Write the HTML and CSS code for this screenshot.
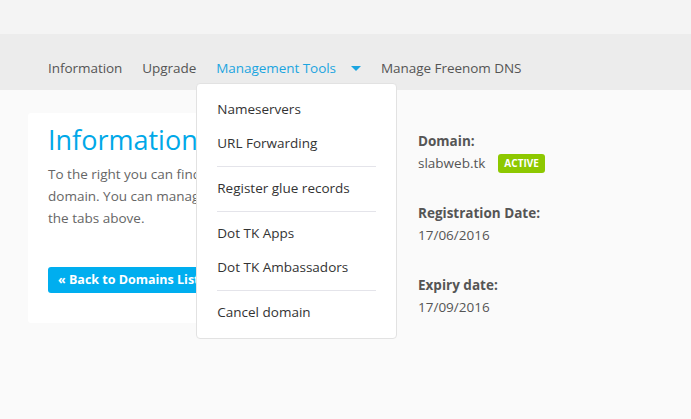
FILE: index.html
```html
<!DOCTYPE html>
<html>
<head>
<meta charset="utf-8">
<link rel="stylesheet" href="styles.css">
</head>
<body>
<div class="topbar"></div>
<nav class="nav">
  <a class="nav-item">Information</a>
  <a class="nav-item">Upgrade</a>
  <div class="nav-drop">
    <a class="nav-item active">Management Tools <span class="caret"></span></a>
    <div class="dropdown">
      <a class="dd-item">Nameservers</a>
      <a class="dd-item">URL Forwarding</a>
      <div class="dd-sep"></div>
      <a class="dd-item">Register glue records</a>
      <div class="dd-sep"></div>
      <a class="dd-item">Dot TK Apps</a>
      <a class="dd-item">Dot TK Ambassadors</a>
      <div class="dd-sep"></div>
      <a class="dd-item">Cancel domain</a>
    </div>
  </div>
  <a class="nav-item">Manage Freenom DNS</a>
</nav>
<main class="main">
  <section class="card">
    <h1 class="title">Information</h1>
    <p class="text">To the right you can find the details of your domain. You can manage your domain through<br>the tabs above.</p>
    <a class="btn">« Back to Domains List</a>
  </section>
  <section class="info">
    <div class="field">
      <div class="label">Domain:</div>
      <div class="value">slabweb.tk <span class="badge">ACTIVE</span></div>
    </div>
    <div class="field">
      <div class="label">Registration Date:</div>
      <div class="value">17/06/2016</div>
    </div>
    <div class="field">
      <div class="label">Expiry date:</div>
      <div class="value">17/09/2016</div>
    </div>
  </section>
</main>
</body>
</html>
```
FILE: styles.css
```css
* { box-sizing: border-box; }
html, body { margin: 0; padding: 0; }
body {
  background: #fafafa;
  font-family: "Open Sans", "Liberation Sans", sans-serif;
  font-size: 13.5px;
  color: #555;
  width: 691px;
  height: 419px;
  overflow: hidden;
}
.topbar { height: 34px; background: #f4f4f4; }
.nav {
  height: 56px;
  background: #ececec;
  display: flex;
  align-items: flex-end;
  padding: 0 0 12px 48px;
  position: relative;
  z-index: 2;
}
.nav-item {
  color: #555;
  line-height: 20px;
  margin-right: 20px;
  white-space: nowrap;
  display: inline-flex;
  align-items: center;
  letter-spacing: -0.05px;
}
.nav-item.active { color: #1ba5e0; }
.caret {
  width: 0; height: 0;
  border-left: 5px solid transparent;
  border-right: 5px solid transparent;
  border-top: 5px solid #1ba5e0;
  margin-left: 15px;
  margin-top: 1px;
}
.nav-drop { position: relative; display: flex; }
.dropdown {
  position: absolute;
  left: -20px;
  top: 25px;
  width: 201px;
  background: #fff;
  border: 1px solid #e2e2e2;
  border-radius: 4px;
  padding: 8px 20px 9px;
  display: flex;
  flex-direction: column;
}
.dd-item {
  color: #333;
  line-height: 20px;
  padding: 7px 0;
  white-space: nowrap;
}
.dd-sep { height: 1px; background: #e4e4ea; margin: 6px 0 4px; }
.main {
  display: flex;
  padding: 23px 0 0 28px;
}
.card {
  width: 362px;
  height: 210px;
  background: #fff;
  border-radius: 3px;
  padding: 9px 20px 8px;
}
.title {
  margin: 0;
  font-size: 27px;
  font-weight: 400;
  color: #00a8e8;
  line-height: 36px;
}
.text {
  margin: 5px 0 0;
  line-height: 22px;
  color: #666;
}
.btn {
  display: inline-block;
  margin-top: 38px;
  background: #00aeef;
  color: #fff;
  font-weight: 700;
  font-size: 12.5px;
  line-height: 26px;
  padding: 0 10px;
  border-radius: 3px;
}
.info { margin-left: 28px; padding-top: 17px; }
.field { margin-bottom: 28px; }
.label { font-weight: 700; color: #555; line-height: 22px; }
.value { color: #555; line-height: 22px; display: flex; align-items: center; }
.badge {
  background: #8dc800;
  color: #fff;
  font-size: 10px;
  font-weight: 700;
  line-height: 19px;
  padding: 0 6px;
  border-radius: 3px;
  margin-left: 13px;
}
```
